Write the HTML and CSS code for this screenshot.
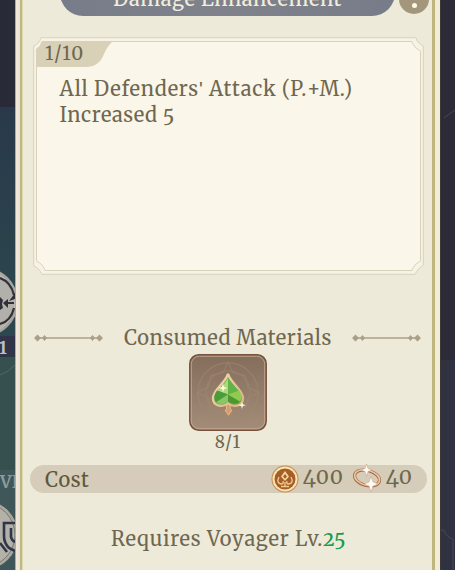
FILE: index.html
```html
<!DOCTYPE html>
<html lang="en">
<head>
<meta charset="utf-8">
<title>Damage Enhancement</title>
<link rel="stylesheet" href="styles.css">
</head>
<body>
<div class="screen">
  <aside class="world">
    <svg width="15" height="570" viewBox="0 0 15 570">
      <defs>
        <linearGradient id="sea" x1="0" y1="0" x2="0" y2="1"><stop offset="0" stop-color="#29394a"/><stop offset="1" stop-color="#2c484e"/></linearGradient>
      </defs>
      <rect width="15" height="108" fill="#292a37"/>
      <rect y="107" width="15" height="230" fill="url(#sea)"/>
      <rect y="336" width="15" height="22" fill="#303448"/>
      <rect y="357" width="15" height="213" fill="#35504f"/>
      <path d="M0 375Q9 372 15 365" fill="none" stroke="#536966"/>
      <rect y="470" width="15" height="100" fill="#3f5759"/>
      <circle cx="-17" cy="302" r="35" fill="#a5a49f"/>
      <circle cx="-17" cy="302" r="32" fill="#b2b0aa" stroke="#c0beb7"/>
      <path d="M0 278Q11 282 14 295M14 308Q11 321 0 324" fill="none" stroke="#303038" stroke-width="2.2"/>
      <path d="M9 301L15 293V299ZM3 303l5-4v3h6v2H8v4zM0 297l3 3-1 4 1 4-3 2z" fill="#303038"/>
      <circle cx="-17" cy="535" r="35" fill="#aaa89f"/>
      <circle cx="-17" cy="535" r="32" fill="#b3b1a8" stroke="#777770"/>
      <path d="M15 523H4V536Q4 543 9 548L15 551M11 528V537Q12 541 15 542M0 543L7 552" fill="none" stroke="#30364a" stroke-width="2.6"/>
      <text x="-1" y="354" class="world-label">1</text>
      <text x="0" y="488" class="world-label dim">VI</text>
    </svg>
  </aside>

  <main class="panel">
    <header class="head">
      <h1 class="title"><span>Damage Enhancement</span></h1>
      <button class="info" aria-label="Info"><i></i></button>
    </header>

    <section class="card">
      <svg class="frame" width="391" height="238" viewBox="0 0 391 238">
        <path d="M8 .7H383Q384 6 390.300 9V228Q385 231 382 237.300H9Q6 231 .7 229V9Q6 7 8 .7Z" fill="#f7f2e3" stroke="#d8d2bc"/>
        <path d="M9 4.500H379Q381 11 387.500 14V224Q381 227 379 233.500H12Q10 227 3.500 224V12Q8 10 9 4.500Z" fill="#faf6e9" stroke="#d8d2bd"/>
        <path d="M9 4H80Q75 8 71 17Q66 30 53 30H3V12Q8 10 9 4Z" fill="#d9d1b7"/>
      </svg>
      <div class="level">1/10</div>
      <p class="desc">All Defenders<span class="tick">'</span> Attack (P.+M.)<br><span class="line2">Increased 5</span></p>
    </section>

    <div class="divider">
      <svg width="70" height="10" viewBox="0 0 70 10"><path d="M5 5H65" stroke="#aaa087" stroke-width="1.300"/><path d="M0 5l3.500-3.500L7 5 3.500 8.500zM8 5l2.500-3L13 5l-2.500 3zM56 5l2.500-3L61 5l-2.500 3zM62 5l3.500-3.500L69 5l-3.500 3.500z" fill="#aaa087"/></svg>
      <h2>Consumed Materials</h2>
      <svg width="70" height="10" viewBox="0 0 70 10"><path d="M5 5H65" stroke="#aaa087" stroke-width="1.300"/><path d="M0 5l3.500-3.500L7 5 3.500 8.500zM8 5l2.500-3L13 5l-2.500 3zM56 5l2.500-3L61 5l-2.500 3zM62 5l3.500-3.500L69 5l-3.500 3.500z" fill="#aaa087"/></svg>
    </div>

    <div class="material">
      <svg width="78" height="77" viewBox="0 0 78 78" preserveAspectRatio="none">
        <defs>
          <linearGradient id="tile" x1="0" y1="0" x2="0" y2="1"><stop offset="0" stop-color="#846d5b"/><stop offset="1" stop-color="#a38c78"/></linearGradient>
          <linearGradient id="gold" x1="0" y1="0" x2="1" y2="1"><stop offset="0" stop-color="#f5dcae"/><stop offset="1" stop-color="#e0b083"/></linearGradient>
        </defs>
        <rect x=".8" y=".8" width="76.400" height="76.400" rx="9" fill="url(#tile)" stroke="#76523f" stroke-width="1.500"/>
        <rect x="2.300" y="2.300" width="73.400" height="73.400" rx="8" fill="none" stroke="#c8ae97" stroke-width=".8"/>
        <g fill="none" stroke="#a18b70" stroke-width="1.200" opacity=".6">
          <circle cx="39" cy="39" r="30"/><circle cx="39" cy="39" r="22"/>
          <path d="M39 8l5 11 12 3 3 12 11 5-11 5-3 12-12 3-5 11-5-11-12-3-3-12-11-5 11-5 3-12 12-3z"/>
        </g>
        <path d="M37.500 51h3.500l.5 5 1.500 1-3.500 5-3.500-5 1.500-1z" fill="#d99b67" stroke="#f1cba0" stroke-width=".7"/>
        <path d="M39 20C41 29 54 36 54 45C54 52 45 55 39 50C33 55 24 52 24 45C24 36 37 29 39 20Z" fill="#60ac42" stroke="url(#gold)" stroke-width="2.400"/>
        <path d="M39 24L39 41 28 37Q36 31 39 24Z" fill="#b0d77c"/>
        <path d="M39 24V41L50 37Q42 31 39 24Z" fill="#62b448"/>
        <path d="M28 37L39 41 27 49Q23 43 28 37Z" fill="#4b9b3c"/>
        <path d="M39 41L51 48Q46 53 39 48Z" fill="#4b9832"/>
        <path d="M39 41L27 49Q33 53 39 48Z" fill="#8bc567"/>
        <path d="M39 41L50 37Q55 43 51 48Z" fill="#91ca50"/>
        <path d="M34 30l1 3.500 3.500 1-3.500 1-1 3.500-1-3.500-3.500-1 3.500-1zM53 48l.8 3 3 .8-3 .8-.8 3-.8-3-3-.8 3-.8z" fill="#f5ffe4"/>
      </svg>
      <div class="count">8/1</div>
    </div>

    <div class="cost">
      <span class="cost-label">Cost</span>
      <svg class="coin" width="28" height="28" viewBox="0 0 28 28">
        <circle cx="14" cy="14" r="13.500" fill="#c38b4e"/><circle cx="14" cy="14" r="12.500" fill="#f9e4b5"/><circle cx="14" cy="14" r="10.500" fill="#a65e29"/>
        <path d="M14 6l4 5.500-4 4.500-4-4.500zM14 9l-2 2.500 2 2.300 2-2.300z" fill="#f7d9a0" fill-rule="evenodd"/>
        <path d="M8 12q-3 6 2 7 3 0 2-3M20 12q3 6-2 7-3 0-2-3M14 17v4M10 21.500h8" fill="none" stroke="#efc88a" stroke-width="1.400"/>
      </svg>
      <span class="amount a400">400</span>
      <svg class="ring" width="30" height="30" viewBox="0 0 30 30">
        <g fill="none" transform="rotate(15 15 14)"><ellipse cx="15" cy="14" rx="12.800" ry="7.500" stroke="#a66549" stroke-width="3.200"/><ellipse cx="15" cy="13.700" rx="12.800" ry="7.500" stroke="#ecc79a" stroke-width="1.700"/></g>
        <path d="M14.500 0l1.500 4.500 4 1.500-4 1.500-1.500 5-1.500-5L9 6l4-1.500zM19 12.500l2 5.500 5 2-5 2L19 28l-2-6-5-2 5-2z" fill="#fffdf5" stroke="#c99b7d" stroke-width=".5"/>
      </svg>
      <span class="amount a40">40</span>
    </div>

    <p class="requires">Requires Voyager Lv.<b>25</b></p>
  </main>

  <aside class="world night">
    <svg width="15" height="570" viewBox="0 0 15 570"><rect width="15" height="570" fill="#2c2b37"/><rect y="360" width="15" height="210" fill="#303141"/><path d="M0 530h4q2 7 9 9v31M4 118l11-8" fill="none" stroke="#464958"/><path d="M.5 0V570" stroke="#3a3936"/></svg>
  </aside>
</div>
</body>
</html>
```
FILE: styles.css
```css
* { box-sizing: border-box; }
body {
  margin: 0;
  font-family: "Merriweather", "DejaVu Serif Condensed", "DejaVu Serif", serif;
  font-size: 20px;
  color: #6f674f;
}
h1, h2, p { margin: 0; font-weight: 400; }
svg { display: block; flex: none; }
.screen { display: grid; grid-template-columns: 15px 425px 15px; width: 455px; height: 570px; overflow: hidden; }
.world { overflow: hidden; }
.world-label { font-size: 17px; font-weight: 700; fill: #bdbfca; }
.world-label.dim { fill: #8b9b9d; }
.panel {
  height: 570px;
  overflow: hidden;
  padding: 0 11px 0 15px;
  background: linear-gradient(90deg, #b3a99e 0 1px, #f0e6d9 1px 4px, #e8e2bd 4px 5px, #bdbb82 5px 7px, #dcd9b2 7px 8px, #eeead9 8px 417px, #bfb67e 417px 420px, #f1ebd7 420px 425px);
  letter-spacing: .6px;
  white-space: nowrap;
}
.head { display: flex; height: 37px; padding-left: 30px; }
.title {
  width: 336px;
  height: 46px;
  margin-top: -30px;
  border-radius: 24px;
  background: linear-gradient(90deg, #777c89, #80828b 50%, #777c89);
  color: #f2eedf;
  font-size: 20px;
  line-height: 46px;
  text-align: center;
}
.title span { display: block; margin-top: 6px; }
.info {
  display: flex;
  align-items: flex-end;
  justify-content: center;
  width: 30px;
  height: 30px;
  margin: -16px 0 0 4px;
  padding: 0 0 6px;
  border: 0;
  border-radius: 50%;
  background: #a3977b;
}
.info i { width: 5px; height: 5px; border-radius: 50%; background: #fff9e9; box-shadow: 0 -7px 0 -1px #fff9e9; }
.card { display: grid; grid-template-rows: 30px 1fr; width: 391px; height: 238px; margin-left: 3px; position: relative; }
.frame { position: absolute; inset: 0; }
.level { position: relative; padding: 4px 0 0 12px; font-size: 18.500px; line-height: 26px; letter-spacing: 1.300px; }
.desc { position: relative; padding: 9px 0 0 26.500px; line-height: 26px; letter-spacing: .74px; }
.tick { font-family: "Liberation Sans", sans-serif; }
.line2 { font-variant-numeric: oldstyle-nums; letter-spacing: .6px; }
.divider { display: flex; align-items: center; height: 28px; margin: 49px 0 0 4px; }
.divider h2 { width: 208px; margin: 0 20px; font-size: 20px; line-height: 28px; letter-spacing: .56px; }
.divider svg { margin-top: -1px; }
.material { display: flex; flex-direction: column; align-items: center; width: 78px; margin: 2px 0 0 159px; }
.count { font-size: 17px; line-height: 23px; letter-spacing: 1px; }
.cost { display: flex; align-items: center; width: 397px; height: 28px; margin-top: 11px; padding-left: 15px; border-radius: 14px; background: #d5cdb9; }
.cost-label { width: 226px; color: #5f573f; }
.amount { margin-top: -4px; font-size: 21px; line-height: 28px; letter-spacing: .8px; font-variant-numeric: oldstyle-nums; }
.coin { margin-right: 4px; }
.a400 { width: 49px; }
.ring { margin-right: 4px; }
.requires { margin: 32px 0 0 81px; line-height: 28px; letter-spacing: .78px; }
.requires b { font-weight: 400; color: #169b51; font-variant-numeric: oldstyle-nums; }
```
